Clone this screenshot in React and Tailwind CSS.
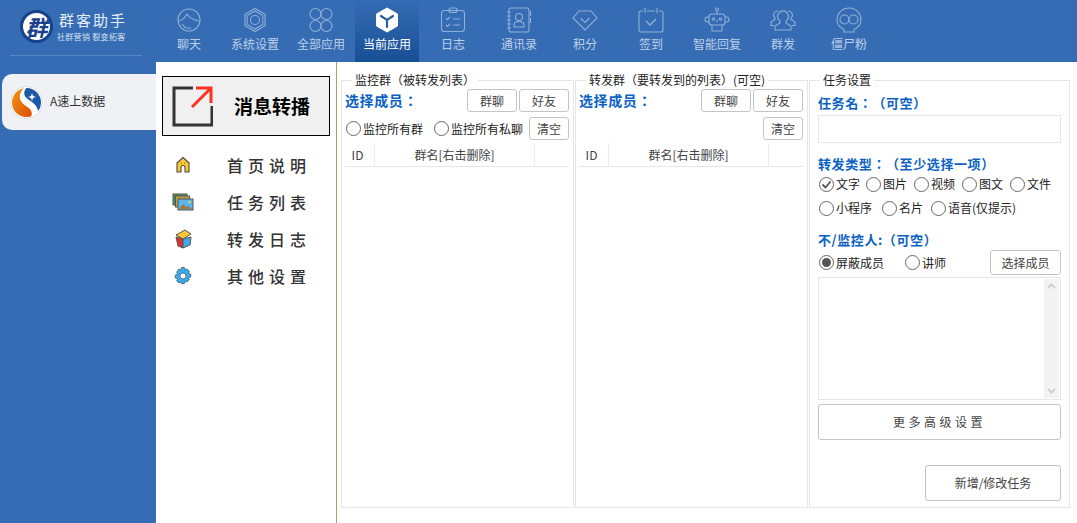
import React from 'react';

const FONT = 'font-["Noto_Sans_CJK_SC","Liberation_Sans",sans-serif]';
// labels with full width punctuation keep its whole width, as in the picture
const LABEL_FONT = 'font-["Noto_Sans_CJK_TC","Liberation_Sans",sans-serif] [text-spacing-trim:space-all]';

// top nav icons, all drawn on a 26x26 box
const ChatIcon = () => (
  <svg width="26" height="26" viewBox="0 0 26 26" fill="none" stroke="currentColor" strokeWidth="1.1">
    <circle cx="13" cy="13" r="11" />
    <path d="M3 14c3-1 6-3 8-7 2 3 6 6 12 7" />
    <path d="M6 17c2 3 5 5 9 4" />
  </svg>
);
const SettingIcon = () => (
  <svg width="26" height="26" viewBox="0 0 26 26" fill="none" stroke="currentColor" strokeWidth="1.1">
    <path d="M13 1.5l10 5.7v11.6l-10 5.7-10-5.7V7.2z" />
    <path d="M13 4l7.800 4.500v9L13 22l-7.800-4.500v-9z" />
    <circle cx="13" cy="13" r="4.500" />
  </svg>
);
const AppsIcon = () => (
  <svg width="26" height="26" viewBox="0 0 26 26" fill="none" stroke="currentColor" strokeWidth="1.1">
    <circle cx="7.500" cy="7" r="5.500" />
    <circle cx="18.500" cy="7" r="5.500" />
    <circle cx="7.500" cy="19" r="5.500" />
    <circle cx="18.500" cy="19" r="5.500" />
  </svg>
);
const CubeIcon = () => (
  <svg width="26" height="26" viewBox="0 0 26 26">
    <path d="M13 1l10.500 6v12L13 25 2.500 19V7z" fill="#fff" stroke="#fff" strokeLinejoin="round" />
    <path d="M7 9l6 4 6-4M13 13v7" fill="none" stroke="#2a5f9f" strokeWidth="2.200" strokeLinecap="round" />
  </svg>
);
const LogIcon = () => (
  <svg width="26" height="26" viewBox="0 0 26 26" fill="none" stroke="currentColor" strokeWidth="1.1">
    <rect x="1.500" y="3.500" width="23" height="21" rx="3" />
    <rect x="9" y="1" width="8" height="4.500" rx="2" />
    <path d="M6 11l1.500 1.500L10 10M6 18l1.500 1.500L10 17M13 12h7M13 18h7" />
  </svg>
);
const ContactIcon = () => (
  <svg width="26" height="26" viewBox="0 0 26 26" fill="none" stroke="currentColor" strokeWidth="1.1">
    <rect x="3" y="1" width="20" height="24" rx="2" />
    <path d="M1 5h4M1 9h4M1 13h4M1 17h4M1 21h4M24.500 4v5M24.500 11v5" />
    <circle cx="13" cy="10" r="3.500" />
    <path d="M8 20v-2c0-2 2-3.500 5-3.500s5 1.500 5 3.500v2z" />
  </svg>
);
const DiamondIcon = () => (
  <svg width="26" height="26" viewBox="0 0 26 26" fill="none" stroke="currentColor" strokeWidth="1.1">
    <path d="M7 4h12l6 7-12 12L1 11z" />
    <path d="M8.500 11l4.500 4.500 4.500-4.500" />
  </svg>
);
const CalendarIcon = () => (
  <svg width="26" height="26" viewBox="0 0 26 26" fill="none" stroke="currentColor" strokeWidth="1.1">
    <path d="M5 4H3a2 2 0 0 0-2 2v17a2 2 0 0 0 2 2h20a2 2 0 0 0 2-2V6a2 2 0 0 0-2-2h-2M9 4h8" />
    <path d="M7 1v5M19 1v5" />
    <path d="M8 14l4 4 6-6" strokeWidth="1.400" />
  </svg>
);
const RobotIcon = () => (
  <svg width="26" height="26" viewBox="0 0 26 26" fill="none" stroke="currentColor" strokeWidth="1.1">
    <circle cx="13" cy="2.500" r="1.500" />
    <path d="M13 4v3" />
    <rect x="5" y="7" width="16" height="11" rx="3" />
    <path d="M5 10H3.500a2 2 0 0 0 0 5H5M21 10h1.500a2 2 0 0 1 0 5H21" />
    <circle cx="9.500" cy="12" r="1.200" />
    <circle cx="16.500" cy="12" r="1.200" />
    <path d="M12 14h2M8 18v6h10v-6" />
  </svg>
);
const GroupIcon = () => (
  <svg width="26" height="26" viewBox="0 0 26 26" fill="none" stroke="currentColor" strokeWidth="1.1">
    <path d="M10 14a5.500 5.500 0 1 1 6 0v2l5 3v4H5v-4l5-3z" />
    <path d="M8 4a4 4 0 0 0-3 7v1.500l-4 2.500v3.500h3" />
    <path d="M18 4a4 4 0 0 1 3 7v1.500l4 2.500v3.500h-3" />
  </svg>
);
const SkullIcon = () => (
  <svg width="26" height="26" viewBox="0 0 26 26" fill="none" stroke="currentColor" strokeWidth="1.1">
    <path d="M8 22.500C3.500 20.500 1 17 1 12.500 1 6 6.500 1 13 1s12 5 12 11.500c0 4.500-2.500 8-7 10V25H8z" />
    <circle cx="8.500" cy="12.500" r="4.500" />
    <circle cx="17.500" cy="12.500" r="4.500" />
  </svg>
);

const navItems = [
  { label: '聊天', icon: <ChatIcon /> },
  { label: '系统设置', icon: <SettingIcon /> },
  { label: '全部应用', icon: <AppsIcon /> },
  { label: '当前应用', icon: <CubeIcon />, active: true },
  { label: '日志', icon: <LogIcon /> },
  { label: '通讯录', icon: <ContactIcon /> },
  { label: '积分', icon: <DiamondIcon /> },
  { label: '签到', icon: <CalendarIcon /> },
  { label: '智能回复', icon: <RobotIcon /> },
  { label: '群发', icon: <GroupIcon /> },
  { label: '僵尸粉', icon: <SkullIcon /> },
];

// small colour icons of the side menu
const HomeIcon = () => (
  <svg width="20" height="20" viewBox="0 0 20 20">
    <path d="M10 2.500l5 4.500 1 1v9h-4v-4.500a2 2 0 0 0-4 0V17H4V8z" fill="#fcc935" stroke="#4a4a4a" strokeWidth="1.100" strokeLinejoin="round" />
    <circle cx="8.500" cy="8" r=".6" fill="#4a4a4a" />
    <circle cx="11.500" cy="8" r=".6" fill="#4a4a4a" />
  </svg>
);
const PicturesIcon = () => (
  <svg width="22" height="20" viewBox="0 0 22 20">
    <rect x="1" y="2" width="14" height="11" fill="#3f9a4f" stroke="#555" />
    <rect x="3.500" y="4" width="14" height="11" fill="#c79a45" stroke="#555" />
    <rect x="6" y="7" width="15" height="11" fill="#57b7ee" stroke="#555" />
    <path d="M7 17l4-5 3 3 2-1 4 3z" fill="#a6763c" />
    <circle cx="17.500" cy="10" r="1.200" fill="#fcd535" />
  </svg>
);
const BoxIcon = () => (
  <svg width="20" height="20" viewBox="0 0 20 20">
    <path d="M3 8l2 9 5 2V10z" fill="#e1302c" stroke="#555" />
    <path d="M10 10v9l7-3 1-8z" fill="#3fa9e9" stroke="#555" />
    <path d="M3 6l9-5 6 4-8 5z" fill="#fcc935" stroke="#555" />
  </svg>
);
const GearIcon = () => (
  <svg width="20" height="20" viewBox="0 0 20 20">
    <path d="M8.500 1.500h3l.5 2.500 2-1 2.300 2.200-1 2 2.400.8v3l-2.400.8 1 2-2.300 2.200-2-1-.5 2.500h-3L8 16l-2 1-2.300-2.200 1-2-2.400-.8V9l2.400-.8-1-2L6 3l2 1z" fill="#35aef0" stroke="#4a5a6a" strokeWidth=".8" />
    <circle cx="10" cy="10" r="3" fill="#fff" stroke="#4a5a6a" strokeWidth=".8" />
  </svg>
);

const menuItems = [
  { label: '首页说明', icon: <HomeIcon /> },
  { label: '任务列表', icon: <PicturesIcon /> },
  { label: '转发日志', icon: <BoxIcon /> },
  { label: '其他设置', icon: <GearIcon /> },
];

const Btn = ({ className = '', children }) => (
  <button type="button" className={'flex items-center justify-center border border-[#c4c4c4] rounded-[3px] bg-white text-[12px] text-[#444] ' + className}>
    {children}
  </button>
);

// radio drawn as css circle: mode is none, dot or check
const Radio = ({ mode, label, className = '' }) => (
  <label className={'flex items-center gap-[2px] text-[12px] text-[#222] whitespace-nowrap ' + className}>
    <span className="w-[15px] h-[15px] shrink-0 rounded-full border border-[#666] bg-white flex items-center justify-center">
      {mode === 'dot' && <span className="w-[9px] h-[9px] rounded-full bg-[#555]" />}
      {mode === 'check' && (
        <svg width="11" height="11" viewBox="0 0 11 11" fill="none" stroke="#555" strokeWidth="1.800">
          <path d="M1.500 5.500l3 3 5-6" />
        </svg>
      )}
    </span>
    {label}
  </label>
);

const SectionLabel = ({ className = '', children }) => (
  <div className={'text-[13px] leading-[18px] font-bold tracking-[.6px] text-[#0b62c4] whitespace-nowrap ' + LABEL_FONT + ' ' + className}>
    {children}
  </div>
);

const MemberList = ({ legend, radios }) => (
  <fieldset className="w-[233px] h-[435px] shrink-0 mr-[1px] border border-[#e6e6e6] px-[3px]">
    <legend className={'ml-[7px] px-[3px] text-[12px] leading-[14px] text-[#222] ' + LABEL_FONT}>{legend}</legend>
    <div className="flex items-center h-[23px] mt-[2px]">
      <span className={'text-[14px] font-bold text-[#0b62c4] tracking-[.6px] ' + LABEL_FONT}>选择成员：</span>
      <Btn className="ml-auto w-[50px] h-[23px]">群聊</Btn>
      <Btn className="ml-[2px] mr-[1px] w-[50px] h-[23px]">好友</Btn>
    </div>
    <div className="flex items-center h-[23px] mt-[5px]">
      {radios && (
        <>
          <Radio label="监控所有群" className="ml-[1px]" />
          <Radio label="监控所有私聊" className="ml-[11px]" />
        </>
      )}
      <Btn className="ml-auto mr-[1px] w-[40px] h-[23px]">清空</Btn>
    </div>
    <div className="flex items-center h-[24px] mt-[3px] mr-[1px] border-b border-[#e6e6e6] text-[12px] text-[#444]">
      <span className="w-[30px] h-full pr-[4px] flex items-center justify-center border-r border-[#ececec]">ID</span>
      <span className="w-[160px] h-full flex items-center justify-center border-r border-[#ececec]">群名[右击删除]</span>
    </div>
  </fieldset>
);

const App = () => {
  return (
    <div className={'w-[1077px] h-[523px] flex flex-col bg-[#366cb3] overflow-hidden ' + FONT}>
      {/* top bar */}
      <header className="h-[62px] flex shrink-0">
        <div className="w-[156px] shrink-0 pl-[10px] pr-[14px]">
          <div className="h-[56px] flex items-center gap-[4px] pl-[10px] border-b border-[#5485c0]">
            <div className="w-[33px] h-[33px] shrink-0 rounded-full bg-white border-[3px] border-[#17418a] flex items-center justify-center text-[22px] leading-none font-bold italic text-[#17418a] mt-[-3px]">
              群
            </div>
            <div className="mt-[-3px]">
              <div className="text-[15px] leading-[17px] tracking-[2px] pl-[2px] text-[#e4ecf6] whitespace-nowrap">群客助手</div>
              <div className="text-[8px] leading-[10px] mt-[4px] tracking-[.3px] whitespace-nowrap text-[#d5e1f0]">社群营销 裂变拓客</div>
            </div>
          </div>
        </div>
        <nav className="flex">
          {navItems.map((item) => (
            <div
              key={item.label}
              className={
                item.active
                  ? 'w-[64px] mx-[1px] flex flex-col items-center pt-[7px] bg-gradient-to-b from-[#366cb3] to-[#174e94] text-white'
                  : 'w-[66px] flex flex-col items-center pt-[7px] text-[#8fb0d8]'
              }
            >
              {item.icon}
              <span className={'mt-[3px] text-[12px] leading-[16px] whitespace-nowrap ' + (item.active ? 'text-white' : 'text-[#bdd0e8]')}>
                {item.label}
              </span>
            </div>
          ))}
        </nav>
      </header>

      <div className="flex-1 flex min-h-0">
        {/* app list */}
        <aside className="w-[156px] shrink-0 pt-[12px] pl-[2px]">
          <div className="h-[56px] flex items-center gap-[7px] pl-[8px] bg-[#f0f1f5] rounded-l-[10px]">
            <svg width="33" height="33" viewBox="0 0 33 33">
              <defs>
                <linearGradient id="org" x1="0" y1="0" x2="1" y2="1">
                  <stop offset="0" stopColor="#f59a12" />
                  <stop offset="1" stopColor="#dd4a05" />
                </linearGradient>
                <clipPath id="disc">
                  <circle cx="16.500" cy="16.500" r="14.500" />
                </clipPath>
              </defs>
              <circle cx="16.500" cy="16.500" r="16" fill="#fff" stroke="#ddd" />
              <g clipPath="url(#disc)">
                <path d="M14 2C8 8 8 15 16 20c5 3 7 6 5 11L0 33V5z" fill="url(#org)" />
                <path d="M17 1c-4 5-4 9 2 13 5 3 8 6 9 11l5-5V0H17z" fill="#1b58a8" />
              </g>
              <path d="M22 7l1 3 3 1-3 1-1 3-1-3-3-1 3-1z" fill="#fff" />
            </svg>
            <span className="text-[12px] text-[#333] mt-[-2px]">A速上数据</span>
          </div>
        </aside>

        {/* function menu */}
        <div className="w-[181px] shrink-0 bg-white border-r border-[#a8a267] pt-[14px] pl-[6px]">
          <div className="w-[168px] h-[60px] flex items-center bg-[#f0f0f0] border border-black">
            <svg className="ml-[9px]" width="41" height="41" viewBox="0 0 41 41" fill="none">
              <path d="M21 2H2v37h38V20" stroke="#333" strokeWidth="3" />
              <path d="M20 21L38 3" stroke="#fb3323" strokeWidth="3" />
              <path d="M24 2h15v15" stroke="#fb3323" strokeWidth="3" />
            </svg>
            <span className="ml-[21px] text-[19px] font-bold text-black whitespace-nowrap">消息转播</span>
          </div>
          <ul className="mt-[10px]">
            {menuItems.map((item) => (
              <li key={item.label} className="h-[37px] flex items-center">
                <span className="w-[30px] ml-[6px] flex justify-center">{item.icon}</span>
                <span className="ml-[29px] text-[16px] font-medium tracking-[5px] text-[#333] whitespace-nowrap">{item.label}</span>
              </li>
            ))}
          </ul>
        </div>

        {/* forward settings */}
        <main className="flex-1 bg-white flex pt-[11px] pl-[4px]">
          <MemberList legend="监控群（被转发列表）" radios />
          <MemberList legend="转发群（要转发到的列表）(可空)" />
          <fieldset className="w-[260px] h-[435px] shrink-0 border border-[#e6e6e6] px-[8px]">
            <legend className={'ml-[2px] px-[3px] text-[12px] leading-[14px] text-[#222] ' + LABEL_FONT}>任务设置</legend>
            <SectionLabel className="mt-[7px]">任务名：（可空）</SectionLabel>
            <input className="block w-[243px] h-[28px] mt-[3px] border border-[#e6e6e6] outline-none" />
            <SectionLabel className="mt-[12px]">转发类型：（至少选择一项）</SectionLabel>
            <div className="flex h-[24px] items-center -mt-[1px] ml-[1px]">
              <Radio mode="check" label="文字" className="w-[47px]" />
              <Radio label="图片" className="w-[48px]" />
              <Radio label="视频" className="w-[48px]" />
              <Radio label="图文" className="w-[48px]" />
              <Radio label="文件" />
            </div>
            <div className="flex h-[24px] items-center ml-[1px]">
              <Radio label="小程序" className="w-[63px]" />
              <Radio label="名片" className="w-[49px]" />
              <Radio label="语音(仅提示)" />
            </div>
            <SectionLabel className="mt-[11px]">不/监控人:（可空）</SectionLabel>
            <div className="flex h-[25px] items-center mt-[1px] ml-[1px]">
              <Radio mode="dot" label="屏蔽成员" className="w-[86px]" />
              <Radio label="讲师" />
              <Btn className="ml-auto w-[71px] h-[25px]">选择成员</Btn>
            </div>
            <div className="flex justify-end w-[243px] h-[123px] mt-[2px] border border-[#e6e6e6] p-[1px]">
              <div className="w-[15px] h-full flex flex-col justify-between items-center py-[4px] bg-[#f3f3f3]">
                <svg width="9" height="6" viewBox="0 0 9 6" fill="none" stroke="#cfcfcf" strokeWidth="2"><path d="M1 5l3.500-3.500L8 5" /></svg>
                <svg width="9" height="6" viewBox="0 0 9 6" fill="none" stroke="#cfcfcf" strokeWidth="2"><path d="M1 1l3.500 3.500L8 1" /></svg>
              </div>
            </div>
            <Btn className="w-[243px] h-[36px] mt-[4px] tracking-[3.5px]">更多高级设置</Btn>
            <Btn className="ml-auto w-[136px] h-[36px] mt-[25px]">新增/修改任务</Btn>
          </fieldset>
        </main>
      </div>
    </div>
  );
};

export default App;
